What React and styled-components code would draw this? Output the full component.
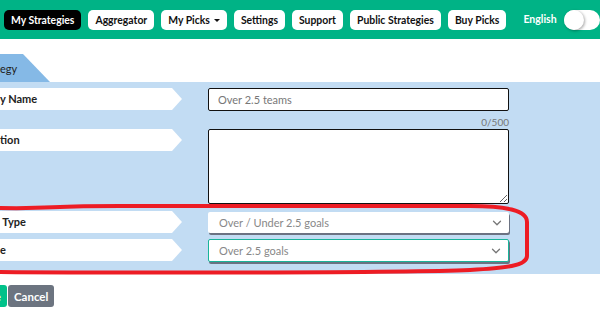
import React from 'react';
import styled, { createGlobalStyle, css } from 'styled-components';
import { ChevronDown } from 'lucide-react';

const GlobalStyle = createGlobalStyle`
	body {
		margin: 0;
		font-family: Lato, 'Liberation Sans', sans-serif;
		background: #fff;
		overflow: hidden;
	}
	* { box-sizing: border-box; }
`;

const navItems = [
	{ label: 'My Strategies', active: true },
	{ label: 'Aggregator' },
	{ label: 'My Picks', caret: true },
	{ label: 'Settings' },
	{ label: 'Support' },
	{ label: 'Public Strategies' },
	{ label: 'Buy Picks' },
];

function App() {
	return (
		<Page>
			<GlobalStyle />
			<NavBar>
				{navItems.map((item) => (
					<NavButton key={item.label} active={item.active}>
						{item.label}
						{item.caret ? <Caret /> : null}
					</NavButton>
				))}
				<Lang>English</Lang>
				<Toggle>
					<Knob />
				</Toggle>
			</NavBar>

			<Section>
				<Tab>egy</Tab>
				<Panel>
					<Row>
						<Label>y Name</Label>
						<TextInput defaultValue="Over 2.5 teams" />
					</Row>
					<Counter>0/500</Counter>
					<Row>
						<Label>tion</Label>
						<TextArea />
					</Row>
					<Row gap>
						<Label>&nbsp;Type</Label>
						<Select>
							Over / Under 2.5 goals
							<ChevronDown size={14} strokeWidth={2.2} color="#777" />
						</Select>
					</Row>
					<Row>
						<Label>e</Label>
						<Select focused>
							Over 2.5 goals
							<ChevronDown size={14} strokeWidth={2.2} color="#777" />
						</Select>
					</Row>
				</Panel>
				<Buttons>
					<Button save>Save</Button>
					<Button>Cancel</Button>
				</Buttons>
			</Section>

			{/* red marker drawn around the two selects */}
			<Marker viewBox="0 0 600 316" width="600" height="316">
				<path
					d="M-2,208 C60,209 40,206 120,206 L470,206 C505,206 527,210 527,222 L527,256 C527,266 505,268 470,270 C400,273 100,273 -2,272"
					fill="none"
					stroke="#ed1c24"
					strokeWidth="4"
				/>
			</Marker>
		</Page>
	);
}

const Page = styled.div`
	position: relative;
	width: 600px;
	height: 316px;
	overflow: hidden;
`;

const NavBar = styled.div`
	height: 39px;
	background: #00b386;
	display: flex;
	align-items: center;
	gap: 7px;
	padding-left: 4px;
`;

const NavButton = styled.div`
	flex-shrink: 0;
	white-space: nowrap;
	height: 20px;
	padding: 0 7px;
	border-radius: 5px;
	background: #fff;
	color: #111;
	font-size: 10.4px;
	font-weight: 700;
	display: flex;
	align-items: center;
	gap: 4px;
	${(props) =>
		props.active
			? css`
					background: #000;
					color: #fff;
			  `
			: null}
`;

const Caret = styled.span`
	width: 0;
	height: 0;
	border-left: 3px solid transparent;
	border-right: 3px solid transparent;
	border-top: 3px solid #111;
	margin-top: 1px;
`;

const Lang = styled.div`
	flex-shrink: 0;
	margin-left: 10px;
	color: #fff;
	font-size: 10.5px;
	font-weight: 700;
	margin-top: -2px;
`;

const Toggle = styled.div`
	flex-shrink: 0;
	width: 36px;
	height: 20px;
	border-radius: 10px;
	background: #fff;
	display: flex;
	align-items: center;
`;

const Knob = styled.div`
	width: 20px;
	height: 20px;
	border-radius: 50%;
	background: #fff;
	box-shadow: 1px 1px 3px rgba(0, 0, 0, 0.35);
`;

const Section = styled.div`
	margin-top: 15px;
`;

const Tab = styled.div`
	width: 50px;
	height: 28px;
	background: #85b9e6;
	clip-path: polygon(0 0, 23px 0, 50px 100%, 0 100%);
	font-size: 11px;
	color: #222;
	display: flex;
	align-items: center;
`;

const Panel = styled.div`
	background: #c2dcf3;
	padding: 6px 0 6px;
	display: flex;
	flex-direction: column;
`;

const Row = styled.div`
	display: grid;
	grid-template-columns: 182px 301px;
	column-gap: 26px;
	align-items: start;
	margin-bottom: 6px;
	${(props) =>
		props.gap
			? css`
					margin-top: 1px;
			  `
			: null}
`;

const Label = styled.div`
	height: 22px;
	background: #fff;
	clip-path: polygon(0 0, 172px 0, 182px 50%, 172px 100%, 0 100%);
	font-size: 11px;
	font-weight: 700;
	color: #222;
	display: flex;
	align-items: center;
	padding-bottom: 1px;
`;

const TextInput = styled.input`
	height: 23px;
	border: 1px solid #111;
	border-radius: 2px;
	padding: 0 9px;
	font-family: inherit;
	font-size: 11px;
	color: #777;
	background: #fff;
	outline: none;
`;

const Counter = styled.div`
	width: 509px;
	text-align: right;
	font-size: 10px;
	color: #777;
	margin: -1px 0 1px;
	line-height: 12px;
`;

const TextArea = styled.textarea`
	height: 75px;
	border: 1px solid #111;
	border-radius: 2px;
	background: #fff;
	resize: vertical;
	font-family: inherit;
	margin: 0;
	display: block;
`;

const Select = styled.div`
	height: 21px;
	margin-top: 1px;
	background: #fff;
	border-radius: 2px;
	box-shadow: 1px 2px 0 #6b7282;
	padding: 0 5px 0 11px;
	font-size: 11px;
	color: #888;
	display: flex;
	align-items: center;
	justify-content: space-between;
	${(props) =>
		props.focused
			? css`
					margin-top: 0;
					border: 1px solid #19b49a;
					padding-left: 10px;
					height: 23px;
			  `
			: null}
`;

const Buttons = styled.div`
	display: flex;
	gap: 1px;
	margin-top: 11px;
	margin-left: -29px;
`;

const Button = styled.div`
	height: 22px;
	padding: 0 6px;
	border-radius: 3px;
	background: #6c7480;
	color: #fff;
	font-size: 11.5px;
	font-weight: 700;
	display: flex;
	align-items: center;
	${(props) =>
		props.save
			? css`
					background: #00c28a;
			  `
			: null}
`;

const Marker = styled.svg`
	position: absolute;
	left: 0;
	top: 0;
	pointer-events: none;
`;

export default App;
